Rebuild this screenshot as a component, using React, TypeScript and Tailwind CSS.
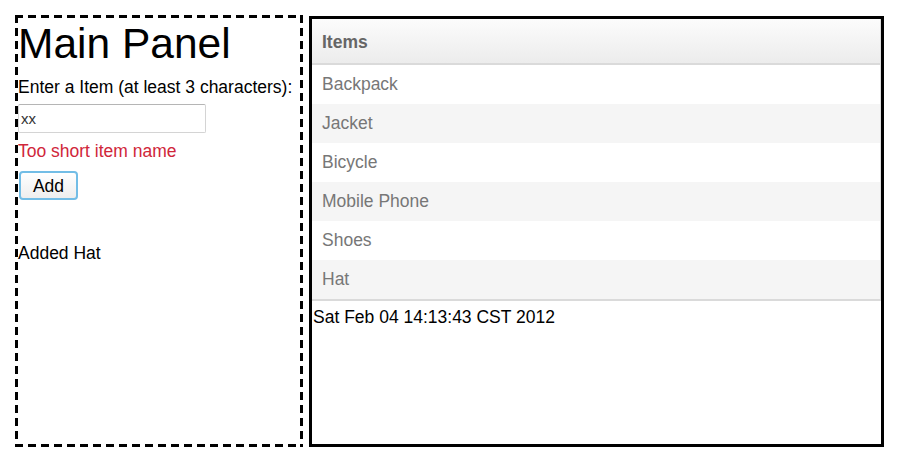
const items = ['Backpack', 'Jacket', 'Bicycle', 'Mobile Phone', 'Shoes', 'Hat'];

export default function App() {
  return (
    <div className="w-[910px] h-[466px] bg-white pt-[15px] pl-[15px] flex gap-[6px] font-['Liberation_Sans',Arial,sans-serif] text-black">
      {/* dashed frame drawn with gradients so the dashes are long like the original */}
      <div className="w-[288px] h-[432px] p-[3px] bg-no-repeat [background-image:repeating-linear-gradient(90deg,#000_0_8px,transparent_8px_13px),repeating-linear-gradient(90deg,#000_0_8px,transparent_8px_13px),repeating-linear-gradient(180deg,#000_0_8px,transparent_8px_13px),repeating-linear-gradient(180deg,#000_0_8px,transparent_8px_13px)] [background-size:100%_3px,100%_3px,3px_100%,3px_100%] [background-position:0_0,0_100%,0_0,100%_0]">
        <h1 className="mt-[2px] text-[42.5px] leading-[48px]">Main Panel</h1>
        <p className="mt-[9px] text-[17.5px] leading-[20px] whitespace-nowrap">Enter a Item (at least 3 characters):</p>
        <input
          className="mt-[7px] block w-[188px] h-[29px] border border-[#d4d4d4] border-t-[#b5b5b5] rounded-[2px] pl-[2px] text-[15px] text-[#333] outline-none"
          value="xx"
          readOnly
        />
        <p className="mt-[8px] text-[17.5px] leading-[20px] text-[#d0263a]">Too short item name</p>
        <button className="mt-[10px] ml-px block w-[59px] h-[29px] rounded-[4px] border-2 border-[#72bde6] bg-gradient-to-b from-white to-[#eeeeee] text-[17.5px] leading-[20px]">
          Add
        </button>
        <p className="mt-[43px] text-[17.5px] leading-[20px]">Added Hat</p>
      </div>

      <div className="mt-px w-[575px] h-[431px] border-[3px] border-black">
        <div className="border-r border-[#dcdcdc]">
          <div className="h-[46px] flex items-center pl-[10px] pt-[3px] bg-gradient-to-b from-[#fcfcfc] to-[#ececec] border-b-2 border-[#dadada] text-[17.5px] font-bold text-[#666]">
            Items
          </div>
          {items.map((item, i) => (
            <div
              key={item}
              className={
                'h-[39px] flex items-center pl-[10px] text-[17.5px] text-[#777] ' +
                (i % 2 === 1 ? 'bg-[#f5f5f5]' : 'bg-white')
              }
            >
              {item}
            </div>
          ))}
        </div>
        <div className="border-t-2 border-[#dadada]" />
        <p className="mt-[6px] pl-px text-[17.5px] leading-[20px]">Sat Feb 04 14:13:43 CST 2012</p>
      </div>
    </div>
  );
}
